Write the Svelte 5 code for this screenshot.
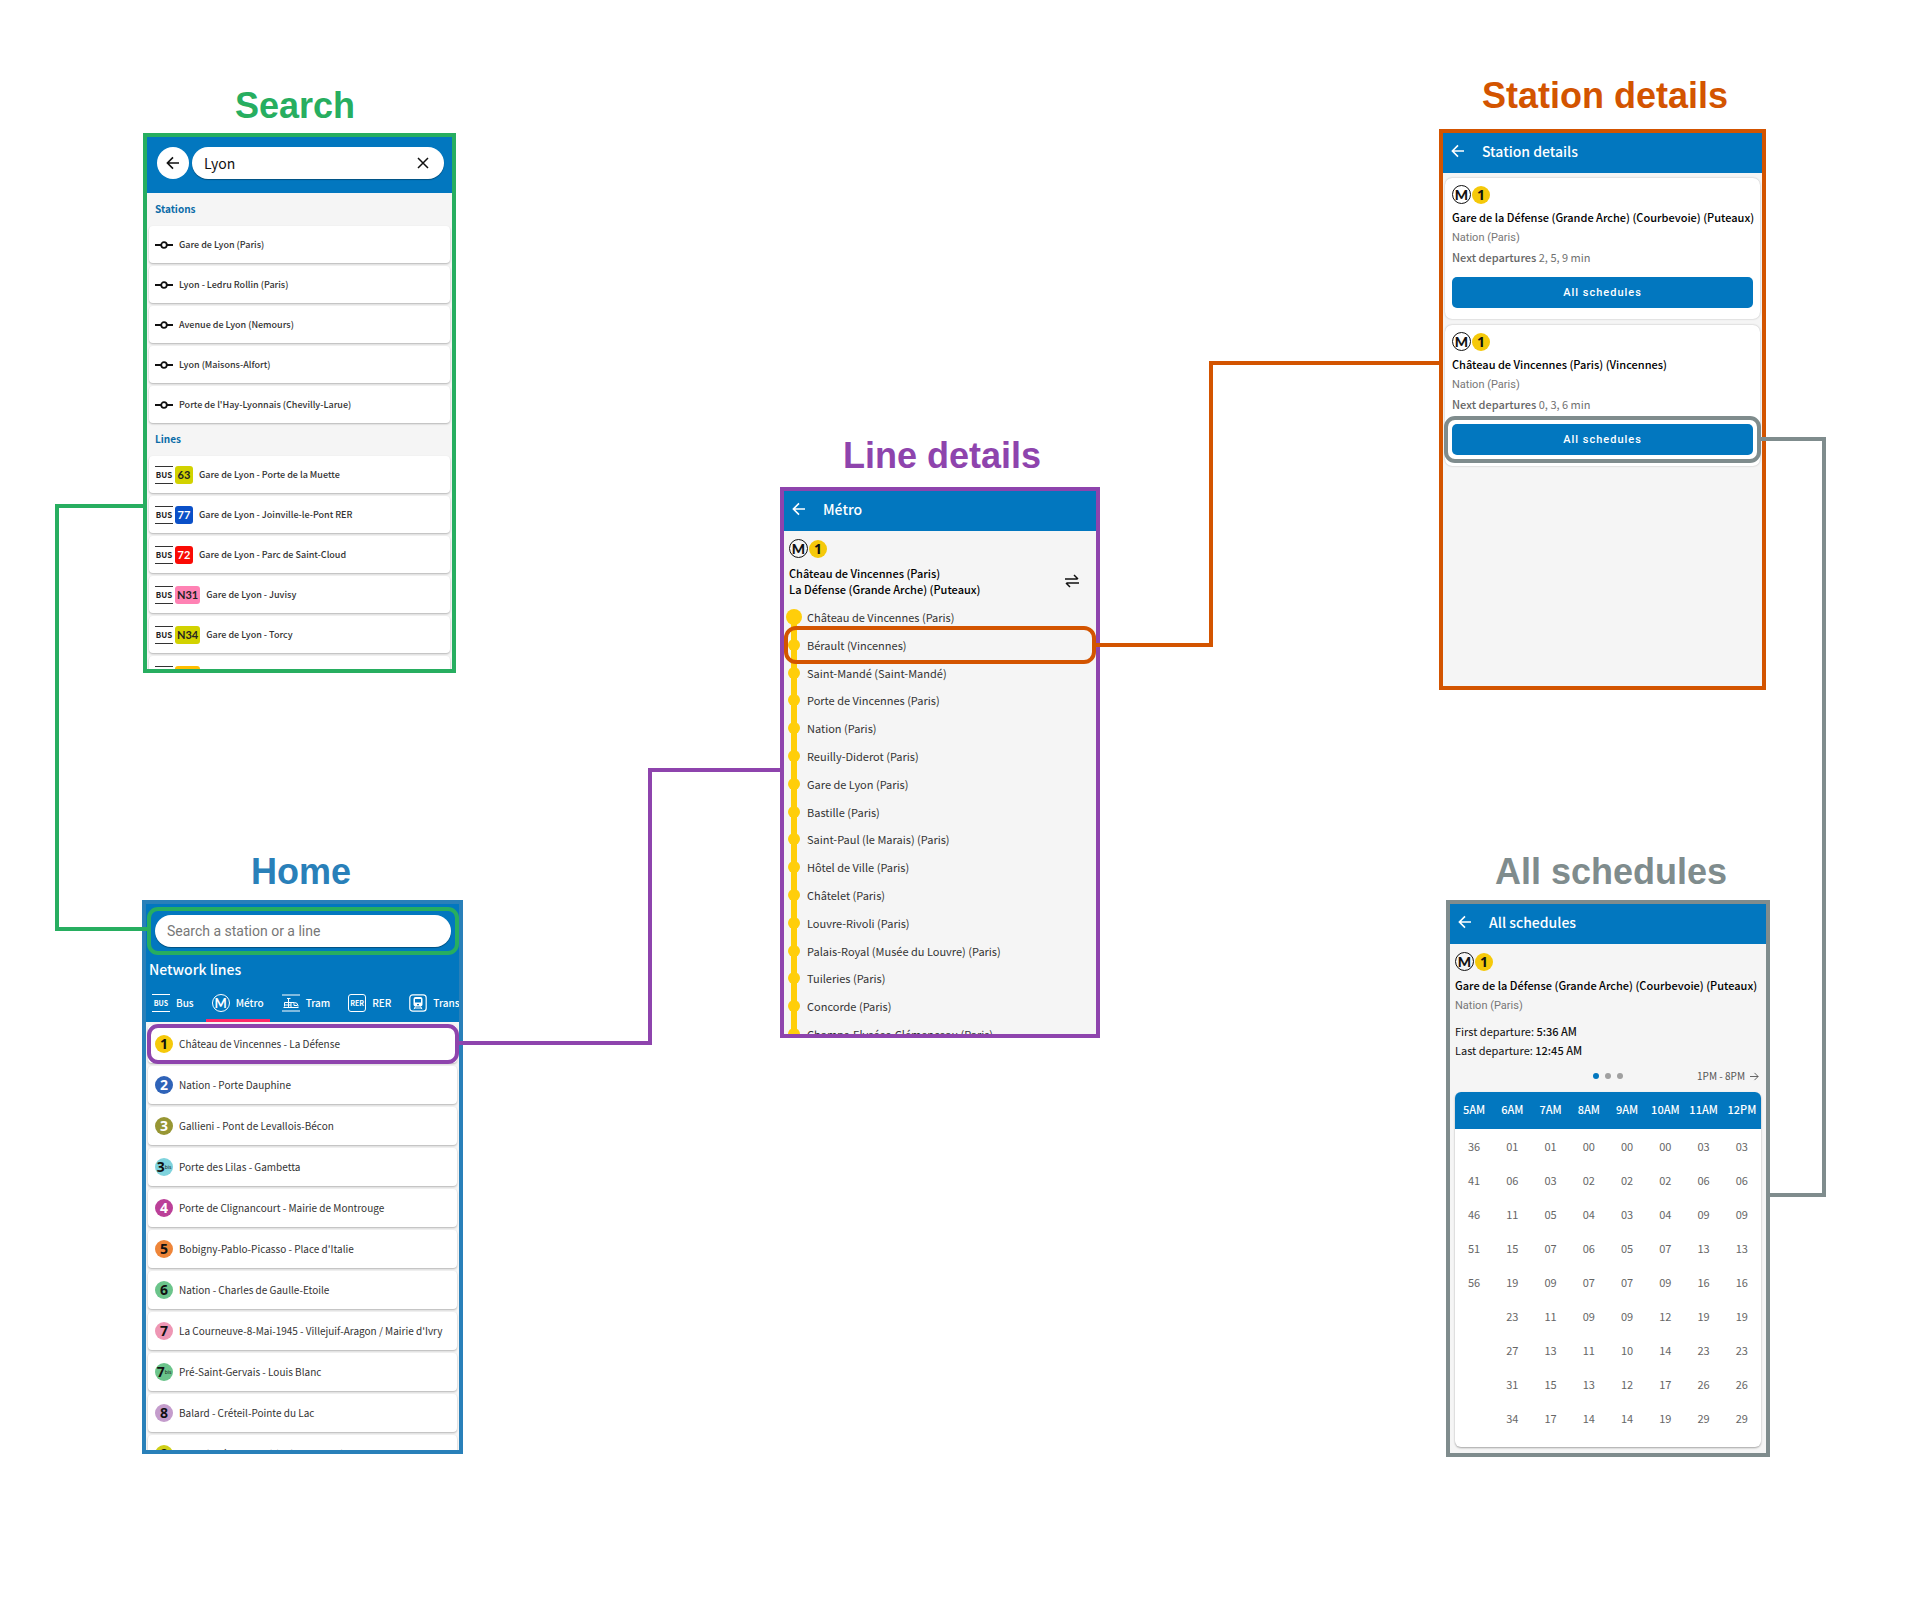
<script lang="ts">
  const stations = [
    'Gare de Lyon (Paris)',
    'Lyon - Ledru Rollin (Paris)',
    'Avenue de Lyon (Nemours)',
    'Lyon (Maisons-Alfort)',
    "Porte de l'Hay-Lyonnais (Chevilly-Larue)",
  ];

  const busLines = [
    { code: '63', tone: 'lime', name: 'Gare de Lyon - Porte de la Muette' },
    { code: '77', tone: 'royal', name: 'Gare de Lyon - Joinville-le-Pont RER' },
    { code: '72', tone: 'red', name: 'Gare de Lyon - Parc de Saint-Cloud' },
    { code: 'N31', tone: 'rose', name: 'Gare de Lyon - Juvisy' },
    { code: 'N34', tone: 'lime', name: 'Gare de Lyon - Torcy' },
  ];

  const metroLines = [
    { n: '1', tone: 'm1', name: 'Château de Vincennes - La Défense' },
    { n: '2', tone: 'm2', name: 'Nation - Porte Dauphine' },
    { n: '3', tone: 'm3', name: 'Gallieni - Pont de Levallois-Bécon' },
    { n: '3', bis: true, tone: 'm3b', name: 'Porte des Lilas - Gambetta' },
    { n: '4', tone: 'm4', name: 'Porte de Clignancourt - Mairie de Montrouge' },
    { n: '5', tone: 'm5', name: "Bobigny-Pablo-Picasso - Place d'Italie" },
    { n: '6', tone: 'm6', name: 'Nation - Charles de Gaulle-Etoile' },
    { n: '7', tone: 'm7', name: "La Courneuve-8-Mai-1945 - Villejuif-Aragon / Mairie d'Ivry" },
    { n: '7', bis: true, tone: 'm6', name: 'Pré-Saint-Gervais - Louis Blanc' },
    { n: '8', tone: 'm8', name: 'Balard - Créteil-Pointe du Lac' },
    { n: '9', tone: 'm9', name: 'Pont de Sèvres - Mairie de Montreuil' },
  ];

  const stops = [
    'Château de Vincennes (Paris)',
    'Bérault (Vincennes)',
    'Saint-Mandé (Saint-Mandé)',
    'Porte de Vincennes (Paris)',
    'Nation (Paris)',
    'Reuilly-Diderot (Paris)',
    'Gare de Lyon (Paris)',
    'Bastille (Paris)',
    'Saint-Paul (le Marais) (Paris)',
    'Hôtel de Ville (Paris)',
    'Châtelet (Paris)',
    'Louvre-Rivoli (Paris)',
    'Palais-Royal (Musée du Louvre) (Paris)',
    'Tuileries (Paris)',
    'Concorde (Paris)',
    'Champs-Elysées-Clémenceau (Paris)',
  ];

  const departures = [
    { from: 'Gare de la Défense (Grande Arche) (Courbevoie) (Puteaux)', next: '2, 5, 9 min' },
    { from: 'Château de Vincennes (Paris) (Vincennes)', next: '0, 3, 6 min' },
  ];

  const hours = ['5AM', '6AM', '7AM', '8AM', '9AM', '10AM', '11AM', '12PM'];
  const minutes = [
    ['36', '01', '01', '00', '00', '00', '03', '03'],
    ['41', '06', '03', '02', '02', '02', '06', '06'],
    ['46', '11', '05', '04', '03', '04', '09', '09'],
    ['51', '15', '07', '06', '05', '07', '13', '13'],
    ['56', '19', '09', '07', '07', '09', '16', '16'],
    ['', '23', '11', '09', '09', '12', '19', '19'],
    ['', '27', '13', '11', '10', '14', '23', '23'],
    ['', '31', '15', '13', '12', '17', '26', '26'],
    ['', '34', '17', '14', '14', '19', '29', '29'],
  ];
</script>

{#snippet arrowLeft()}
  <svg class="arrow" viewBox="0 0 14 14" aria-hidden="true">
    <path d="M13 7H1.6M7 1.4 1.4 7 7 12.6" />
  </svg>
{/snippet}

{#snippet lineBadges()}
  <div class="badges">
    <span class="metro-mark">M</span>
    <span class="disc m1">1</span>
  </div>
{/snippet}

{#snippet appBar(title: string)}
  <header class="app-bar">
    <button class="plain" aria-label="Back">{@render arrowLeft()}</button>
    <h3>{title}</h3>
  </header>
{/snippet}

<main class="board">
  <h2 class="title t-search">Search</h2>
  <section class="screen s-search">
    <header class="search-bar">
      <button class="round" aria-label="Back">{@render arrowLeft()}</button>
      <div class="field">
        <input type="text" value="Lyon" aria-label="Search" />
        <button class="plain" aria-label="Clear">
          <svg class="cross" viewBox="0 0 12 12" aria-hidden="true"><path d="m1 1 10 10M11 1 1 11" /></svg>
        </button>
      </div>
    </header>
    <h4 class="group">Stations</h4>
    <ul class="cards results">
      {#each stations as name}
        <li class="card">
          <svg class="stop-icon" viewBox="0 0 18 8" aria-hidden="true">
            <path d="M0 4h6M12 4h6" /><circle cx="9" cy="4" r="2.8" />
          </svg>
          <span>{name}</span>
        </li>
      {/each}
    </ul>
    <h4 class="group">Lines</h4>
    <ul class="cards results">
      {#each busLines as line}
        <li class="card">
          <span class="bus-pair">
            <span class="bus-mark">BUS</span>
            <span class="plate {line.tone}">{line.code}</span>
          </span>
          <span>{line.name}</span>
        </li>
      {/each}
      <li class="card">
        <span class="bus-pair">
          <span class="bus-mark"></span>
          <span class="plate wide amber"></span>
        </span>
      </li>
    </ul>
  </section>

  <h2 class="title t-home">Home</h2>
  <section class="screen s-home">
    <header class="home-head">
      <div class="home-search">
        <input type="text" placeholder="Search a station or a line" aria-label="Search a station or a line" />
      </div>
      <h3>Network lines</h3>
      <nav class="tabs">
        <button class="tab"><span class="bus-mark light">BUS</span>Bus</button>
        <button class="tab active"><span class="metro-mark light">M</span>Métro</button>
        <button class="tab">
          <svg class="mode" viewBox="0 0 18 18" aria-hidden="true">
            <path d="M0 1h18M0 17h18" />
            <path class="thin" d="M1.500 13.500h15M2.500 12.500V8.500h10q3 0 3.500 3v1M5 4.500h3.500M6.500 4.500v8.500M9 8.500v4.500M12 9v2.500h3.500M3 11h6" />
          </svg>Tram
        </button>
        <button class="tab"><span class="rer-mark">RER</span>RER</button>
        <button class="tab">
          <svg class="mode" viewBox="0 0 18 18" aria-hidden="true">
            <rect x="0.800" y="0.800" width="16.400" height="16.400" rx="3" />
            <path class="solid" fill-rule="evenodd" d="M6.500 3h5q2 0 2 2v5.500q0 2-2 2h-5q-2 0-2-2V5q0-2 2-2ZM6 5v3.500h6V5ZM8 10h2v1.200H8Z" />
            <path class="thin" d="M6.500 12.500 5 15.200M11.500 12.500 13 15.200M5.500 14h7" />
          </svg>Transilien
        </button>
      </nav>
    </header>
    <ul class="cards lines">
      {#each metroLines as line}
        <li class="card">
          <span class="disc {line.tone}">{line.n}{#if line.bis}<small>bis</small>{/if}</span>
          <span>{line.name}</span>
        </li>
      {/each}
    </ul>
  </section>

  <h2 class="title t-line">Line details</h2>
  <section class="screen s-line">
    {@render appBar('Métro')}
    <div class="line-head">
      {@render lineBadges()}
      <div class="ends">
        <p class="strong">Château de Vincennes (Paris)<br />La Défense (Grande Arche) (Puteaux)</p>
        <button class="plain" aria-label="Swap direction">
          <svg class="swap" viewBox="0 0 14 14" aria-hidden="true"><path d="M0 5h12.500M9 1l4 4M14 9H1.500M5 13 1 9" /></svg>
        </button>
      </div>
    </div>
    <ol class="stops">
      {#each stops as stop}
        <li><i></i><span>{stop}</span></li>
      {/each}
    </ol>
  </section>

  <h2 class="title t-station">Station details</h2>
  <section class="screen s-station">
    {@render appBar('Station details')}
    <div class="panels">
      {#each departures as d}
        <article class="panel">
          {@render lineBadges()}
          <p class="strong">{d.from}</p>
          <p class="muted">Nation (Paris)</p>
          <p class="next"><b>Next departures</b> {d.next}</p>
          <button class="primary">All schedules</button>
        </article>
      {/each}
    </div>
  </section>

  <h2 class="title t-all">All schedules</h2>
  <section class="screen s-all">
    {@render appBar('All schedules')}
    <div class="sched">
      {@render lineBadges()}
      <p class="strong">Gare de la Défense (Grande Arche) (Courbevoie) (Puteaux)</p>
      <p class="muted">Nation (Paris)</p>
      <div class="limits">
        <p>First departure: <b>5:36 AM</b></p>
        <p>Last departure: <b>12:45 AM</b></p>
      </div>
      <div class="pager">
        <span class="dots"><i class="on"></i><i></i><i></i></span>
        <button class="plain range">
          1PM - 8PM
          <svg class="mini" viewBox="0 0 10 10" aria-hidden="true"><path d="M0 5h9M5 1l4 4-4 4" /></svg>
        </button>
      </div>
      <table>
        <thead>
          <tr>{#each hours as h}<th scope="col">{h}</th>{/each}</tr>
        </thead>
        <tbody>
          {#each minutes as row}
            <tr>{#each row as m}<td>{m}</td>{/each}</tr>
          {/each}
        </tbody>
      </table>
    </div>
  </section>

  <svg class="links" width="100%" height="100%" aria-hidden="true">
    <g class="green">
      <path d="M145 506H57V929H149" />
      <rect x="149" y="909" width="308" height="44" rx="9" />
    </g>
    <g class="purple">
      <path d="M457 1043H650V770H782" />
      <rect x="149" y="1026" width="308" height="36" rx="9" />
    </g>
    <g class="orange">
      <path d="M1094 645H1211V363H1441" />
      <rect x="786" y="628" width="308" height="34" rx="10" />
    </g>
    <g class="grey">
      <path d="M1759 439H1824V1195H1768" />
      <rect x="1446" y="418" width="313" height="43" rx="9" />
    </g>
  </svg>
</main>

<style>
  :global(body) {
    margin: 0;
    background: #fff;
  }

  .board {
    --blue: #0277bf;
    --green: #27ae60;
    --azure: #2980b9;
    --purple: #8e44ad;
    --orange: #d35400;
    --grey: #7f8c8d;
    --source: 'Noto Sans CJK SC', 'Noto Sans', sans-serif;
    position: relative;
    min-width: 1860px;
    min-height: max(100vh, 1500px);
    overflow: hidden;
    font: 11px/16px var(--source);
    color: #333;
  }

  h2, h3, h4, p, ul, ol {
    margin: 0;
    padding: 0;
  }

  ul, ol {
    list-style: none;
  }

  button, input {
    font: inherit;
    color: inherit;
    border: 0;
    padding: 0;
    margin: 0;
    background: none;
  }

  input {
    min-width: 0;
    outline: 0;
  }

  svg {
    fill: none;
    stroke: currentColor;
    flex: none;
    display: block;
  }

  .title {
    position: absolute;
    font: bold 36px/40px 'Liberation Sans', Arial, sans-serif;
    white-space: nowrap;
  }

  .t-search { left: 235px; top: 86px; color: var(--green); }
  .t-home { left: 251px; top: 852px; color: var(--azure); }
  .t-line { left: 843px; top: 436px; color: var(--purple); }
  .t-station { left: 1482px; top: 76px; color: var(--orange); }
  .t-all { left: 1495px; top: 852px; color: var(--grey); }

  .screen {
    position: absolute;
    box-sizing: border-box;
    border: 4px solid;
    overflow: hidden;
    background: #f5f5f5;
  }

  .s-search { left: 143px; top: 133px; width: 313px; height: 540px; border-color: var(--green); }
  .s-home { left: 142px; top: 900px; width: 321px; height: 554px; border-color: var(--azure); }
  .s-line { left: 780px; top: 487px; width: 320px; height: 551px; border-color: var(--purple); }
  .s-station { left: 1439px; top: 129px; width: 327px; height: 561px; border-color: var(--orange); }
  .s-all { left: 1446px; top: 900px; width: 324px; height: 557px; border-color: var(--grey); }

  .plain {
    display: flex;
    align-items: center;
  }

  .arrow {
    width: 14px;
    height: 14px;
    stroke-width: 1.600;
  }

  .app-bar {
    display: flex;
    align-items: center;
    gap: 17px;
    height: 40px;
    padding: 0 8px 4px;
    box-sizing: border-box;
    background: var(--blue);
    color: #fff;
  }

  .app-bar h3 {
    font-size: 14px;
    font-weight: 500;
  }

  .search-bar {
    display: flex;
    gap: 3px;
    height: 56px;
    padding: 10px 8px 14px 10px;
    box-sizing: border-box;
    background: var(--blue);
    color: #111;
  }

  .round {
    display: grid;
    place-items: center;
    width: 32px;
    height: 32px;
    border-radius: 50%;
    background: #fff;
  }

  .field {
    flex: 1;
    display: flex;
    align-items: center;
    padding: 0 15px 0 12px;
    border-radius: 16px;
    background: #fff;
    box-shadow: 0 1px 1px #0005;
  }

  .field input {
    flex: 1;
    font-size: 14px;
    line-height: 24px;
  }

  .cross {
    width: 12px;
    height: 12px;
    stroke-width: 1.500;
  }

  .group {
    padding: 8px;
    height: 17px;
    font-size: 10px;
    font-weight: 700;
    color: #0a6ca8;
  }

  .cards {
    display: flex;
    flex-direction: column;
    gap: 3px;
    padding: 0 2px;
  }

  .results {
    font-size: 9px;
    font-weight: 500;
  }

  .card {
    display: flex;
    align-items: center;
    gap: 6px;
    height: 37px;
    padding-left: 6px;
    border-radius: 4px;
    background: #fff;
    box-shadow: 0 1px 2px #0004;
    white-space: nowrap;
  }

  .lines {
    padding-top: 3px;
    font-size: 10px;
  }

  .lines .card {
    height: 38px;
    padding-left: 7px;
  }

  .stop-icon {
    width: 18px;
    height: 8px;
    color: #111;
    stroke-width: 1.800;
  }

  .bus-pair {
    display: flex;
    align-items: center;
    gap: 2px;
  }

  .bus-mark {
    flex: none;
    box-sizing: border-box;
    width: 18px;
    height: 18px;
    border: solid #333;
    border-width: 1px 0;
    font-size: 8px;
    font-weight: 700;
    text-align: center;
    color: #222;
  }

  .bus-mark.light {
    border-color: #fff;
    font-size: 7px;
    color: #fff;
  }

  .plate {
    box-sizing: border-box;
    min-width: 18px;
    height: 18px;
    padding: 0 2px;
    border-radius: 3px;
    font: bold 11px/18px Lato, sans-serif;
    text-align: center;
    color: #222;
  }

  .plate.wide {
    min-width: 25px;
  }

  .lime { background: #d2d200; }
  .royal { background: #0a50c8; color: #fff; }
  .red { background: #fa0a05; color: #fff; }
  .rose { background: #ff82b4; }
  .amber { background: #ffbe00; }

  .metro-mark {
    flex: none;
    display: flex;
    justify-content: center;
    box-sizing: border-box;
    width: 19px;
    height: 19px;
    border: 1px solid #111;
    border-radius: 50%;
    font: 900 14px/17px Lato, sans-serif;
    color: #111;
  }

  .metro-mark.light {
    width: 18px;
    height: 18px;
    border-color: #fff;
    font-size: 13px;
    font-weight: 700;
    line-height: 16px;
    color: #fff;
  }

  .rer-mark {
    flex: none;
    display: flex;
    justify-content: center;
    box-sizing: border-box;
    width: 18px;
    height: 18px;
    border: 1px solid #fff;
    border-radius: 3px;
    font-size: 7px;
    font-weight: 700;
  }

  .disc {
    flex: none;
    display: flex;
    justify-content: center;
    align-items: center;
    width: 18px;
    height: 18px;
    border-radius: 50%;
    font: bold 14px/18px 'Open Sans', sans-serif;
    color: #111;
  }

  .disc small {
    font: 5px/8px 'Open Sans', sans-serif;
  }

  .m1 { background: #f5c90a; }
  .m2 { background: #2f63b8; color: #fff; }
  .m3 { background: #979634; color: #fff; }
  .m3b { background: #7fd3dd; }
  .m4 { background: #bb4098; color: #fff; }
  .m5 { background: #ee8539; }
  .m6 { background: #6bc48b; }
  .m7 { background: #ee96b4; }
  .m8 { background: #c49ccc; }
  .m9 { background: #cfcf18; }

  .home-head {
    display: flex;
    flex-direction: column;
    height: 118px;
    padding-top: 11px;
    box-sizing: border-box;
    background: var(--blue);
    color: #fff;
  }

  .home-search {
    display: flex;
    height: 32px;
    margin: 0 8px 0 9px;
    padding: 0 12px;
    border-radius: 16px;
    background: #fff;
    box-shadow: 0 1px 1px #0005;
  }

  .home-search input {
    flex: 1;
    font: 14px/20px Roboto, sans-serif;
  }

  .home-search input::placeholder {
    color: #777;
    opacity: 1;
  }

  .home-head h3 {
    padding: 12px 3px 8px;
    font-size: 14px;
    line-height: 20px;
    font-weight: 500;
  }

  .tabs {
    flex: 1;
    display: flex;
    gap: 6px;
  }

  .tab {
    flex: none;
    display: flex;
    align-items: center;
    gap: 6px;
    padding: 0 6px;
    font-size: 10px;
    font-weight: 500;
    border-bottom: 3px solid transparent;
  }

  .tab.active {
    border-color: #ff2a68;
  }

  .mode {
    width: 18px;
    height: 18px;
    stroke-width: 1.200;
  }

  .mode .thin {
    stroke-width: 1;
  }

  .mode .solid {
    fill: currentColor;
    stroke: none;
  }

  .badges {
    display: flex;
    align-items: center;
    gap: 1px;
  }

  .strong {
    font-weight: 500;
    color: #000;
    white-space: nowrap;
  }

  .line-head {
    padding: 8px 17px 6px 5px;
  }

  .ends {
    display: flex;
    justify-content: space-between;
    padding-top: 7px;
    color: #111;
  }

  .swap {
    width: 14px;
    height: 14px;
    stroke-width: 1.500;
  }

  .stops {
    display: grid;
    grid-auto-rows: 1fr;
    height: 445px;
    padding-left: 4px;
  }

  .stops li {
    display: flex;
    align-items: center;
    gap: 7px;
    background: linear-gradient(#ffce0a, #ffce0a) 3px 0 / 6px 100% no-repeat;
  }

  .stops li:first-child {
    background-size: 6px 50%;
    background-position: 3px 100%;
  }

  .stops i {
    width: 12px;
    height: 12px;
    border-radius: 50%;
    background: #ffce0a;
  }

  .stops li:first-child i {
    box-shadow: 0 0 0 2px #ffce0a;
  }

  .panels {
    display: flex;
    flex-direction: column;
    gap: 6px;
    padding: 5px 2px;
  }

  .panel {
    display: flex;
    flex-direction: column;
    padding: 7px 7px 11px;
    border-radius: 7px;
    background: #fff;
    box-shadow: 0 0 2px #0004;
  }

  .panel .strong {
    padding: 4px 0 2px;
    line-height: 18px;
  }

  .sched .strong {
    padding: 5px 0 2px;
    line-height: 18px;
  }

  .muted {
    font: 11px/20px Roboto, sans-serif;
    color: #777;
  }

  .next {
    line-height: 18px;
    color: #707070;
  }

  .next b {
    font-weight: 500;
    color: #666;
  }

  .primary {
    height: 31px;
    margin-top: 11px;
    border-radius: 5px;
    background: var(--blue);
    color: #fff;
    font: 500 11px/16px Roboto, sans-serif;
    letter-spacing: 1px;
  }

  .sched {
    padding: 8px 5px 4px;
  }

  .limits {
    padding-top: 6px;
    line-height: 19px;
    color: #111;
  }

  .limits b {
    font-weight: 500;
  }

  .pager {
    display: grid;
    grid-template-columns: 1fr auto 1fr;
    align-items: center;
    height: 32px;
  }

  .dots {
    grid-column: 2;
    display: flex;
    gap: 6px;
  }

  .dots i {
    width: 6px;
    height: 6px;
    border-radius: 50%;
    background: #a0a0a0;
  }

  .dots .on {
    background: var(--blue);
  }

  .range {
    justify-self: end;
    gap: 5px;
    padding-right: 2px;
    font-size: 10px;
    color: #555;
  }

  .mini {
    width: 9px;
    height: 9px;
  }

  table {
    width: 100%;
    table-layout: fixed;
    border-spacing: 0;
    padding-bottom: 12px;
    border-radius: 6px;
    overflow: hidden;
    background: #fff;
    box-shadow: 0 1px 2px #0005;
    text-align: center;
  }

  th {
    box-sizing: border-box;
    height: 37px;
    padding: 0 0 4px;
    background: var(--blue);
    color: #fff;
    font-weight: 500;
  }

  td {
    height: 34px;
    padding: 0;
    color: #666;
  }

  .links {
    position: absolute;
    inset: 0;
    pointer-events: none;
    stroke-width: 4;
  }

  .green { color: var(--green); }
  .purple { color: var(--purple); }
  .orange { color: var(--orange); }
  .grey { color: var(--grey); }
</style>
